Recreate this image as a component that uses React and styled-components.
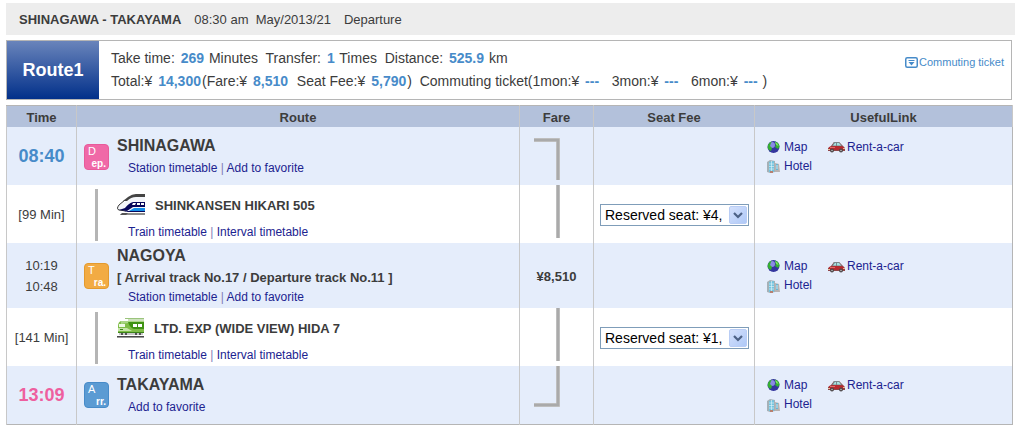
import React from "react";
import styled, { createGlobalStyle } from "styled-components";

const GlobalStyle = createGlobalStyle`
  body {
    margin: 0;
    background: #fff;
    color: #3c3c3c;
    font-family: "Liberation Sans", Arial, sans-serif;
    font-size: 13px;
  }
`;
const Page = styled.main`
  padding: 3px 5px 3px 6px;
`;
const SearchBar = styled.header`
  display: flex;
  align-items: center;
  gap: 13px;
  height: 32px;
  padding: 0 13px;
  background: #ededed;
`;
const SearchRoute = styled.h1`
  margin: 0;
  font-size: 13px;
`;
const SearchTime = styled.span`
  white-space: pre;
`;
const Summary = styled.section`
  display: flex;
  margin: 5px 3px 5px 0;
  border: 1px solid #b5b5b5;
`;
const SummaryTitle = styled.h2`
  display: flex;
  align-items: center;
  justify-content: center;
  flex: 0 0 92px;
  margin: 0;
  color: #fff;
  background: linear-gradient(#6984bb, #02308a);
  font-size: 18px;
`;
const SummaryText = styled.div`
  flex: 1;
  padding: 6px 12px;
  font-size: 14px;
  line-height: 23px;
`;
const SummaryLine = styled.div`
  white-space: pre-wrap;

  b {
    margin: 0 1px 0 2px;
    color: #478bc9;
  }
`;
const TicketLink = styled.a`
  display: flex;
  align-items: center;
  align-self: flex-start;
  gap: 1px;
  margin: 14px 7px 0 0;
  color: #478bc9;
  font-size: 11px;
  line-height: 14px;
  text-decoration: none;
`;
const Timetable = styled.table`
  width: calc(100% - 2px);
  table-layout: fixed;
  border-collapse: collapse;
  border: 1px solid #b5b5b5;
`;
const Column = styled.col`
  width: ${(props) => props.$width || "auto"};
`;
const HeadCell = styled.th`
  height: 20px;
  padding: 1px 0 0;
  border: 1px solid #c8c8c8;
  border-top-color: #b5b5b5;
  border-bottom: 0;
  background: #b3c1db;
  font-size: 13px;
`;
const Row = styled.tr`
  height: 58px;
  background: ${(props) => (props.$station ? "#e5edfb" : "#fff")};
`;
const Cell = styled.td`
  padding: ${(props) => (props.$top ? "0" : "1px 0 0")};
  border-left: 1px solid #c8c8c8;
  text-align: ${(props) => (props.$align ? props.$align : "left")};
  vertical-align: ${(props) => (props.$top ? "top" : "middle")};
`;
const StationTime = styled.strong`
  color: ${(props) => (props.$arrival ? "#ee5f9f" : "#478bc9")};
  font-size: 18px;
`;
const StopTime = styled.div`
  line-height: 21px;
`;
const RouteLayout = styled.div`
  display: flex;
  align-items: center;
  padding: 0 7px;
`;
const Marker = styled.div`
  display: flex;
  flex: 0 0 33px;
`;
const Badge = styled.span`
  display: flex;
  flex-direction: column;
  box-sizing: border-box;
  width: 25px;
  height: 26px;
  padding: 0 2px 0 3px;
  border: 1px solid ${(props) => props.$edge};
  border-radius: 4px;
  color: #fff;
  background: ${(props) => props.$color};
  font-size: 11px;
  line-height: 13px;

  small {
    font-size: 10px;
    font-weight: bold;
    line-height: 11px;
    text-align: right;
  }
`;
const RideBar = styled.span`
  width: 3px;
  height: 52px;
  margin-left: 11px;
  background: #b5b5b5;
`;
const Details = styled.div`
  padding: ${(props) => (props.$compact ? "0" : "7px 0 0")};
`;
const StationName = styled.h3`
  margin: 0;
  font-size: 16px;
  line-height: 24px;
`;
const Track = styled.div`
  font-weight: bold;
  line-height: 19px;
`;
const TrainName = styled.h3`
  display: flex;
  align-items: center;
  gap: 10px;
  height: 24px;
  margin: 0 0 5px;
  font-size: 13px;
`;
const LinkList = styled.nav`
  padding-left: 11px;
  color: #8080b8;
  font-size: 12px;
  line-height: 21px;
`;
const TextLink = styled.a`
  color: #1c2390;
  text-decoration: none;
`;
const UsefulGrid = styled.nav`
  display: grid;
  grid-template-columns: 61px auto;
  justify-content: start;
  padding-left: 12px;
`;
const UsefulLink = styled.a`
  display: flex;
  align-items: center;
  gap: ${(props) => (props.$tight ? "2px" : "4px")};
  color: #1c2390;
  font-size: 12px;
  line-height: 19px;
  text-decoration: none;
`;
const SelectWrapper = styled.div`
  position: relative;
  margin: 0 5px 0 6px;
`;
const SeatSelect = styled.select`
  display: block;
  box-sizing: border-box;
  width: 100%;
  height: 22px;
  padding: 0 20px 0 4px;
  border: 1px solid #7f9db9;
  border-radius: 0;
  appearance: none;
  color: #000;
  background: #fff;
  font-family: inherit;
  font-size: 14px;
`;
const SelectArrow = styled.svg`
  position: absolute;
  top: 2px;
  right: 2px;
  pointer-events: none;
`;
const FareLine = styled.svg`
  display: block;
  margin: 0 auto;
`;

const TicketIcon = () => (
  <svg width="13" height="11" viewBox="0 0 13 11">
    <rect x=".75" y=".75" width="11.5" height="9.5" rx="1.5" fill="#fff" stroke="#478bc9" strokeWidth="1.5" />
    <path d="M3.5 3h6v1h-6zM3.5 5h6l-3 3.5z" fill="#478bc9" />
  </svg>
);
const ShinkansenIcon = () => (
  <svg width="28" height="22" viewBox="0 0 28 22">
    <path d="M6 19h22v2H3z" fill="#8b8b8b" />
    <path d="M5 19h6l-2 2H3z" fill="#555" />
    <path d="M13 3h15v14H11L2 15.500Q0 14 3 11z" fill="#f4f6fa" />
    <path d="M8 6L2 11q-3 4 0 5l7 1" fill="none" stroke="#333" />
    <path d="M28 0v3H19q-5 0-9 4H6l5-4q4-3 8-3z" fill="#444" />
    <path d="M28 8v5H16l-6 4-8-1 6-2q4-5 8-6z" fill="#06065a" />
    <path d="M16 9h3l-1 2h-3zM20 9h3v2h-3zM24 9h3v2h-3z" fill="#fff" />
    <path d="M28 14v3H12l5-3z" fill="#148de8" />
    <path d="M28 17v1H7l4-1z" fill="#06065a" />
  </svg>
);
const ExpressIcon = () => (
  <svg width="27" height="20" viewBox="0 0 27 20">
    <path d="M8 .5h19M11 2h16" stroke="#9bc47c" />
    <path d="M4 3h23v11H1V8q0-4 3-5z" fill="#7fbd47" />
    <path d="M4 3h23v2H11L4 6z" fill="#a9d585" />
    <path d="M11 4h16v7H17q-4-1-6-7z" fill="#3f9312" />
    <path d="M2 6h6v3H2z" fill="#eef8e5" />
    <path d="M1 10h9l5 3H1z" fill="#c5e4a7" />
    <path d="M16 6h4v3h-4zM21 6h4v3h-4z" fill="#fff" />
    <path d="M3 11h3v1H3zM1 14h26v1H1z" fill="#3b8419" />
    <path d="M2 15h24v2H2z" fill="#c7c7c7" />
    <path d="M4 15h2v2H4zM8 15h2v2H8zM18 15h2v2h-2zM22 15h2v2h-2z" fill="#555" />
    <path d="M0 18h27v1H0z" fill="#484848" />
    <path d="M0 19h27v1H0z" fill="#999" />
  </svg>
);
const MapIcon = () => (
  <svg width="13" height="13" viewBox="0 0 13 13">
    <circle cx="6.500" cy="6" r="6" fill="#34369e" />
    <circle cx="5" cy="4" r="3" fill="#8b8be4" />
    <path d="M1 4Q2 1 5 .5L4 2 3 5l2 2-1 3-2-1Q0 7 1 4zM8 .5q4 1 4.500 5L11 8 8 6l1-2z" fill="#35b030" />
    <path d="M8 1q3 1 3.500 4L9 4z" fill="#7be45d" />
  </svg>
);
const CarIcon = () => (
  <svg width="17" height="12" viewBox="0 0 17 12">
    <path d="M3 5l3-4h5l4 4 2 2v3H0V7z" fill="#8f4547" />
    <path d="M4 5l2-4h5l3 4z" fill="#78888c" />
    <path d="M5 4.500L7 2h1v2.500zM9 2h2l2 2.500H9z" fill="#a8e1df" />
    <path d="M1 6q7-2 15 0v3H1z" fill="#b82a2f" />
    <path d="M2 6h5v1H2z" fill="#e26b68" />
    <path d="M0 8h2v1H0zM15 7h2v1h-2z" fill="#e3c09d" />
    <circle cx="4" cy="9.500" r="2" fill="#4b4648" />
    <circle cx="13" cy="9.500" r="2" fill="#4b4648" />
    <circle cx="4" cy="9.500" r=".8" fill="#bbb" />
    <circle cx="13" cy="9.500" r=".8" fill="#bbb" />
  </svg>
);
const HotelIcon = () => (
  <svg width="13" height="14" viewBox="0 0 13 14">
    <path d="M0 3l3-2 5 1v11l-5 1-3-1z" fill="#a6b1b7" />
    <path d="M2 3l5-1v11H2z" fill="#74c4df" />
    <path d="M2 5h5M2 7.500h5M2 10h5M4.500 2v11" stroke="#e4f5fa" strokeWidth=".6" />
    <path d="M8 4l4 1 1 8H8z" fill="#b9b3b2" />
    <path d="M9 5h2v6H9z" fill="#67b6d4" />
    <path d="M9 7h2M9 9h2" stroke="#fff" strokeWidth=".7" />
    <path d="M3 12h3v2H3z" fill="#b78070" />
  </svg>
);

const linePaths = {
  start: "M3 13h24v40",
  middle: "M27 0v53",
  end: "M27 0v39H3",
};
const FareConnector = ({ type }) => (
  <FareLine width="51" height="53" viewBox="0 0 51 53" fill="none">
    <path d={linePaths[type]} stroke="#d2d2d2" strokeWidth="4" />
    <path d={linePaths[type]} stroke="#aaa" strokeWidth="3" />
  </FareLine>
);
const Links = ({ items }) => (
  <LinkList>
    {items.map((item, index) => (
      <React.Fragment key={item}>
        {index > 0 && " | "}
        <TextLink href="#">{item}</TextLink>
      </React.Fragment>
    ))}
  </LinkList>
);
const UsefulLinks = () => (
  <UsefulGrid>
    <UsefulLink href="#">
      <MapIcon />
      Map
    </UsefulLink>
    <UsefulLink href="#" $tight>
      <CarIcon />
      Rent-a-car
    </UsefulLink>
    <UsefulLink href="#">
      <HotelIcon />
      Hotel
    </UsefulLink>
  </UsefulGrid>
);
const StationRow = ({ time, badge, name, track, links, fare }) => (
  <Row $station>
    <Cell $align="center">{time}</Cell>
    <Cell>
      <RouteLayout>
        <Marker>
          <Badge $color={badge.color} $edge={badge.edge}>
            {badge.letter}
            <small>{badge.rest}</small>
          </Badge>
        </Marker>
        <Details $compact>
          <StationName>{name}</StationName>
          {track && <Track>{track}</Track>}
          <Links items={links} />
        </Details>
      </RouteLayout>
    </Cell>
    <Cell $align="center" $top={!track}>
      {fare}
    </Cell>
    <Cell />
    <Cell>
      <UsefulLinks />
    </Cell>
  </Row>
);
const TrainRow = ({ duration, name, icon, seat }) => (
  <Row>
    <Cell $align="center">[{duration} Min]</Cell>
    <Cell>
      <RouteLayout>
        <Marker>
          <RideBar />
        </Marker>
        <Details>
          <TrainName>
            {icon}
            {name}
          </TrainName>
          <Links items={["Train timetable", "Interval timetable"]} />
        </Details>
      </RouteLayout>
    </Cell>
    <Cell $top>
      <FareConnector type="middle" />
    </Cell>
    <Cell>
      <SelectWrapper>
        <SeatSelect aria-label={`Seat fee, ${name}`}>
          <option>{seat}</option>
        </SeatSelect>
        <SelectArrow width="18" height="18" viewBox="0 0 18 18">
          <defs>
            <linearGradient id="arrow" x1="0" y1="0" x2="1" y2="1">
              <stop stopColor="#d5e1fc" />
              <stop offset="1" stopColor="#aec8f7" />
            </linearGradient>
          </defs>
          <rect x=".5" y=".5" width="17" height="17" rx="1.500" fill="url(#arrow)" stroke="#b9cdf5" />
          <path d="M5 7l4 4 4-4" fill="none" stroke="#4d6185" strokeWidth="2.200" />
        </SelectArrow>
      </SelectWrapper>
    </Cell>
    <Cell />
  </Row>
);

const stationLinks = ["Station timetable", "Add to favorite"];

export default function App() {
  return (
    <Page>
      <GlobalStyle />
      <SearchBar>
        <SearchRoute>SHINAGAWA - TAKAYAMA</SearchRoute>
        <SearchTime>{"08:30 am  May/2013/21"}</SearchTime>
        <span>Departure</span>
      </SearchBar>
      <Summary>
        <SummaryTitle>Route1</SummaryTitle>
        <SummaryText>
          <SummaryLine>
            Take time: <b>269</b>
            {" Minutes  Transfer: "}
            <b>1</b>
            {" Times  Distance: "}
            <b>525.9</b> km
          </SummaryLine>
          <SummaryLine>
            Total:¥ <b>14,300</b>(Fare:¥ <b>8,510</b>
            {"  Seat Fee:¥ "}
            <b>5,790</b>
            {")  Commuting ticket(1mon:¥ "}
            <b>---</b>
            {"   3mon:¥ "}
            <b>---</b>
            {"   6mon:¥ "}
            <b>---</b> )
          </SummaryLine>
        </SummaryText>
        <TicketLink href="#">
          <TicketIcon />
          Commuting ticket
        </TicketLink>
      </Summary>
      <Timetable>
        <colgroup>
          <Column $width="70px" />
          <Column />
          <Column $width="74px" />
          <Column $width="161px" />
          <Column $width="258px" />
        </colgroup>
        <thead>
          <tr>
            <HeadCell>Time</HeadCell>
            <HeadCell>Route</HeadCell>
            <HeadCell>Fare</HeadCell>
            <HeadCell>Seat Fee</HeadCell>
            <HeadCell>UsefulLink</HeadCell>
          </tr>
        </thead>
        <tbody>
          <StationRow
            time={<StationTime>08:40</StationTime>}
            badge={{ letter: "D", rest: "ep.", color: "#f069a7", edge: "#e85b9b" }}
            name="SHINAGAWA"
            links={stationLinks}
            fare={<FareConnector type="start" />}
          />
          <TrainRow duration="99" name="SHINKANSEN HIKARI 505" icon={<ShinkansenIcon />} seat="Reserved seat: ¥4," />
          <StationRow
            time={
              <>
                <StopTime>10:19</StopTime>
                <StopTime>10:48</StopTime>
              </>
            }
            badge={{ letter: "T", rest: "ra.", color: "#f2ab43", edge: "#e39a2e" }}
            name="NAGOYA"
            track="[ Arrival track No.17 / Departure track No.11 ]"
            links={stationLinks}
            fare={<strong>¥8,510</strong>}
          />
          <TrainRow duration="141" name="LTD. EXP (WIDE VIEW) HIDA 7" icon={<ExpressIcon />} seat="Reserved seat: ¥1," />
          <StationRow
            time={<StationTime $arrival>13:09</StationTime>}
            badge={{ letter: "A", rest: "rr.", color: "#5b9bd3", edge: "#478bc9" }}
            name="TAKAYAMA"
            links={["Add to favorite"]}
            fare={<FareConnector type="end" />}
          />
        </tbody>
      </Timetable>
    </Page>
  );
}
